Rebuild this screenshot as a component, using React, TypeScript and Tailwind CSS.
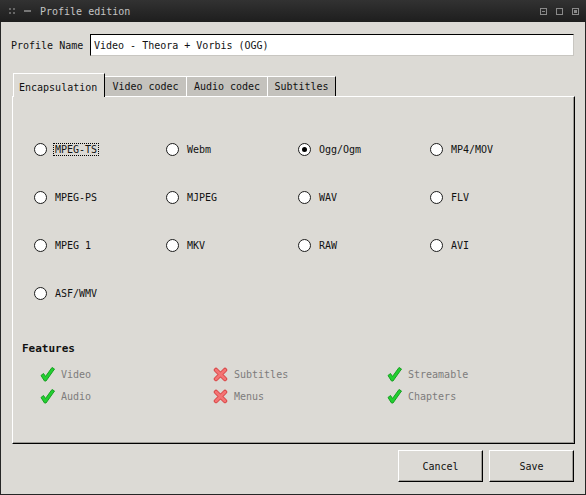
import React from "react";

const formats = [
  "MPEG-TS", "Webm", "Ogg/Ogm", "MP4/MOV",
  "MPEG-PS", "MJPEG", "WAV", "FLV",
  "MPEG 1", "MKV", "RAW", "AVI",
  "ASF/WMV",
];

const features = [
  { label: "Video", ok: true },
  { label: "Subtitles", ok: false },
  { label: "Streamable", ok: true },
  { label: "Audio", ok: true },
  { label: "Menus", ok: false },
  { label: "Chapters", ok: true },
];

const tabs = ["Video codec", "Audio codec", "Subtitles"];

function Check() {
  return (
    <svg width="15" height="16" viewBox="0 0 15 16">
      <path
        d="M1 9.5 L3.5 7.5 L5.5 10.5 L12 1.5 L14.5 3 L6 15 L4.5 15 Z"
        fill="#22d030"
        stroke="#17a022"
        strokeWidth="1"
        strokeLinejoin="round"
      />
    </svg>
  );
}

function Cross() {
  return (
    <svg width="15" height="15" viewBox="0 0 15 15">
      <g stroke="#d84a4a" strokeWidth="4.5" strokeLinecap="round">
        <path d="M3 3 L12 12 M12 3 L3 12" />
      </g>
      <g stroke="#f47474" strokeWidth="2.5" strokeLinecap="round">
        <path d="M3 3 L12 12 M12 3 L3 12" />
      </g>
    </svg>
  );
}

function Radio({ label, checked, focused }: { label: string; checked?: boolean; focused?: boolean }) {
  return (
    <div className="flex items-center gap-[8px]">
      <span className="w-[13px] h-[13px] rounded-full border border-[#1c1c1c] bg-white flex items-center justify-center">
        {checked && <span className="w-[5px] h-[5px] rounded-full bg-black" />}
      </span>
      <span className={focused ? "outline outline-1 outline-dotted outline-black -ml-px px-px leading-[11px]" : "leading-[11px]"}>
        {label}
      </span>
    </div>
  );
}

export default function App() {
  return (
    <div
      className="w-[586px] h-[495px] flex flex-col text-[10px] text-[#111]"
      style={{ fontFamily: '"DejaVu Sans Mono", "Liberation Mono", monospace' }}
    >
      {/* Title bar */}
      <div className="h-[22px] flex items-center bg-gradient-to-b from-[#323232] to-[#1e1e1e] text-[#c4c4c4]">
        <div className="ml-[9px] grid grid-cols-2 gap-[2px]">
          <span className="w-[2px] h-[2px] bg-[#666]" />
          <span className="w-[2px] h-[2px] bg-[#666]" />
          <span className="w-[2px] h-[2px] bg-[#666]" />
          <span className="w-[2px] h-[2px] bg-[#666]" />
        </div>
        <span className="ml-[9px] w-[7px] h-[2px] bg-[#777]" />
        <span className="ml-[9px] text-[10px]">Profile edition</span>
        <div className="ml-auto mr-[7px] flex items-center gap-[9px]">
          <span className="w-[7px] h-[7px] border border-[#8a8a8a] flex items-center justify-center">
            <span className="w-[3px] h-px bg-[#8a8a8a] mt-[1px]" />
          </span>
          <span className="w-[7px] h-[7px] border border-[#8a8a8a]" />
          <span className="w-[7px] h-[7px] border border-[#8a8a8a] flex items-center justify-center">
            <span className="w-[3px] h-[3px] bg-[#8a8a8a]" />
          </span>
        </div>
      </div>

      {/* Body */}
      <div className="flex-1 flex flex-col bg-[#dcdad5] border-x border-b border-[#262626]">
        {/* Profile name */}
        <div className="mt-[12px] flex items-center">
          <span className="ml-[10px] w-[79px]">Profile Name</span>
          <div className="w-[484px] h-[22px] bg-white border-t border-l border-black border-b border-r border-b-[#c8c6c1] border-r-[#c8c6c1] flex items-center pl-[3px]">
            Video - Theora + Vorbis (OGG)
          </div>
        </div>

        {/* Tabs */}
        <div className="mt-[17px] ml-[12px] flex items-end h-[23px]">
          <div className="relative z-10 h-[24px] -mb-px w-[92px] bg-[#dcdad5] border-t border-l border-white border-r border-r-black flex items-start pt-[6px] pl-[5px]">
            Encapsulation
          </div>
          {tabs.map((t, i) => (
            <div
              key={t}
              className={`h-[20px] bg-[#c4c2bd] border-t border-white flex items-center justify-center ${
                i === 0 ? "w-[81px]" : i === 1 ? "w-[81px] border-l" : "w-[69px] border-l border-r border-r-black"
              }`}
            >
              {t}
            </div>
          ))}
        </div>

        {/* Panel */}
        <div className="ml-[11px] w-[563px] h-[348px] border-t border-l border-white border-r border-b border-r-black border-b-black shadow-[inset_-1px_-1px_0_#9c9a95]">
          <div className="pl-[21px] pt-[28px] grid grid-cols-[132px_132px_132px_132px]">
            {formats.map((f) => (
              <div key={f} className="h-[48px] flex items-center">
                <Radio label={f} checked={f === "Ogg/Ogm"} focused={f === "MPEG-TS"} />
              </div>
            ))}
          </div>

          <div className="mt-[25px] ml-[9px] h-[14px] flex items-center font-bold text-[11px]">Features</div>

          <div className="mt-[7px] ml-[27px] grid grid-cols-[173px_174px_174px] text-[#7c7c7c]">
            {features.map((f) => (
              <div key={f.label} className="h-[22px] flex items-center gap-[6px]">
                {f.ok ? <Check /> : <Cross />}
                <span>{f.label}</span>
              </div>
            ))}
          </div>
        </div>

        {/* Buttons */}
        <div className="mt-[6px] mr-[11px] flex justify-end gap-[6px]">
          {["Cancel", "Save"].map((b) => (
            <div
              key={b}
              className="w-[85px] h-[32px] flex items-center justify-center border border-white border-r-black border-b-black shadow-[inset_-1px_-1px_0_#a09e99]"
            >
              {b}
            </div>
          ))}
        </div>
      </div>
    </div>
  );
}
